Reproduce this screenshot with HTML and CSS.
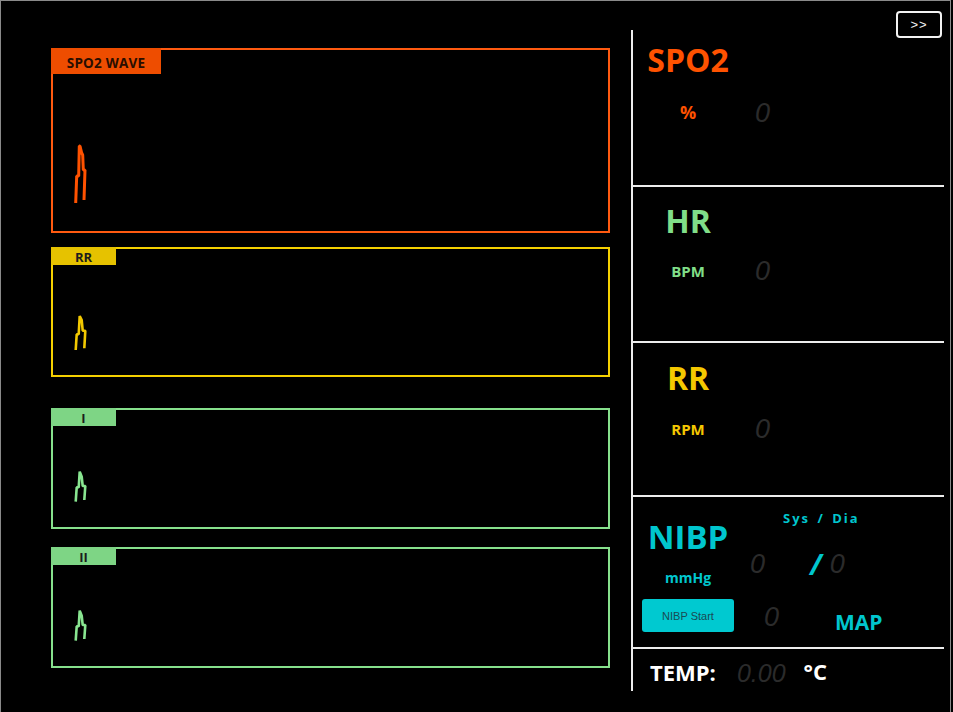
FILE: index.html
```html
<!DOCTYPE html>
<html lang="en">
<head>
<meta charset="utf-8">
<title>Monitor</title>
<link rel="stylesheet" href="styles.css">
</head>
<body>
<div class="screen">
  <div class="waves">
    <div class="wave wave-spo2">
      <div class="tag tag-big">SPO2 WAVE</div>
      <svg class="trace" viewBox="0 0 555 181" width="555" height="181"><polyline points="22.7,153 23.7,126 25.7,126 26.3,96 27,96 28.7,103 29.7,105 30.3,120 32,120 31,150" /></svg>
    </div>
    <div class="wave wave-rr">
      <div class="tag">RR</div>
      <svg class="trace" viewBox="0 0 555 126" width="555" height="126"><polyline points="22.7,101 23.7,85.3 25.7,85.3 26.7,67 28.7,71 29.7,81.7 32.3,81.7 31.3,99.3" /></svg>
    </div>
    <div class="wave wave-ecg wave-i">
      <div class="tag">I</div>
      <svg class="trace" viewBox="0 0 555 117" width="555" height="117"><polyline points="22.7,91.7 23.7,77.3 25.7,77.3 26.7,61.7 28.7,66.7 29.7,76 32.3,76 31.3,90" /></svg>
    </div>
    <div class="wave wave-ecg wave-ii">
      <div class="tag">II</div>
      <svg class="trace" viewBox="0 0 555 117" width="555" height="117"><polyline points="22.7,91.7 23.7,77.3 25.7,77.3 26.7,61.7 28.7,66.7 29.7,76 32.3,76 31.3,90" /></svg>
    </div>
  </div>

  <div class="side">
    <div class="side-head">
      <button class="next-btn" type="button">&gt;&gt;</button>
    </div>
    <div class="panel">
      <section class="vital vital-spo2">
        <div class="v-title">SPO2</div>
        <div class="v-unit v-unit-pct">%</div>
        <div class="seg v-value">0</div>
      </section>
      <section class="vital vital-hr">
        <div class="v-title">HR</div>
        <div class="v-unit">BPM</div>
        <div class="seg v-value">0</div>
      </section>
      <section class="vital vital-rr">
        <div class="v-title">RR</div>
        <div class="v-unit">RPM</div>
        <div class="seg v-value">0</div>
      </section>
      <section class="nibp">
        <div class="nibp-left">
          <div class="nibp-title">NIBP</div>
          <div class="nibp-unit">mmHg</div>
          <button class="nibp-btn" type="button">NIBP Start</button>
        </div>
        <div class="nibp-right">
          <div class="sysdia">Sys / Dia</div>
          <div class="bp-row">
            <span class="seg bp-sys">0</span>
            <span class="bp-slash">/</span>
            <span class="seg bp-dia">0</span>
          </div>
          <div class="map-row">
            <span class="seg map-val">0</span>
            <span class="map-label">MAP</span>
          </div>
        </div>
      </section>
      <section class="temp">
        <span class="temp-label">TEMP:</span>
        <span class="seg temp-val">0.00</span>
        <span class="temp-unit">°C</span>
      </section>
    </div>
  </div>
</div>
</body>
</html>
```

FILE: styles.css
```css
* { box-sizing: border-box; }
html, body {
  margin: 0;
  padding: 0;
  background: #000;
  overflow: hidden;
}
body {
  font-family: "Open Sans", "Liberation Sans", sans-serif;
  color: #fff;
}
.screen {
  width: 951px;
  height: 730px;
  border: 1px solid #8a8a8a;
  background: #000;
  display: flex;
}

/* ---------- waves ---------- */
.waves {
  width: 609px;
  padding: 47px 0 0 50px;
  display: flex;
  flex-direction: column;
}
.wave {
  position: relative;
  width: 559px;
  border: 2px solid;
  background: #000;
}
.trace {
  position: absolute;
  left: 0;
  top: 0;
}
.trace polyline {
  fill: none;
  stroke-width: 2.6;
  stroke-linejoin: bevel;
}
.tag {
  position: relative;
  z-index: 1;
  margin: -2px 0 0 -2px;
  width: 65px;
  height: 18px;
  padding-top: 2px;
  text-align: center;
  font-weight: 700;
  font-size: 13px;
  line-height: 17px;
  color: #1c1c1c;
}
.tag-big {
  width: 110px;
  height: 26px;
  padding-top: 7px;
  font-size: 13.5px;
  letter-spacing: 0.2px;
  color: #2a0e00;
}
.wave-spo2 { height: 185px; border-color: #ff5a10; }
.wave-spo2 .tag { background: #ee4d00; }
.wave-spo2 polyline { stroke: #ff5200; stroke-width: 3; }
.wave-rr { height: 130px; margin-top: 14px; border-color: #f5d000; }
.wave-rr .tag { background: #e6c200; }
.wave-rr polyline { stroke: #f2c800; }
.wave-ecg { height: 121px; border-color: #86e08c; }
.wave-ecg .tag { background: #7ed585; }
.wave-ecg polyline { stroke: #88e590; }
.wave-i { margin-top: 31px; }
.wave-ii { margin-top: 18px; }

/* ---------- side panel ---------- */
.side {
  margin-left: 21px;
  width: 313px;
  display: flex;
  flex-direction: column;
}
.side-head {
  height: 29px;
  display: flex;
  justify-content: flex-end;
  padding-right: 2px;
  position: relative;
  z-index: 1;
}
.next-btn {
  margin-top: 10px;
  width: 46px;
  height: 27px;
  border: 2px solid #f2f2f2;
  border-radius: 4px;
  background: #000;
  color: #f2f2f2;
  font-family: "Liberation Sans", Arial, sans-serif;
  font-size: 13px;
  line-height: 20px;
  padding: 0;
  letter-spacing: 1px;
}
.panel {
  height: 661px;
  border-left: 2px solid #ececec;
  display: flex;
  flex-direction: column;
}
.seg {
  font-family: "Liberation Sans", Arial, sans-serif;
  font-style: italic;
  font-weight: 400;
  font-size: 27px;
  line-height: 28px;
  color: #2b2b2b;
}

.vital {
  display: grid;
  grid-template-columns: 110px 1fr;
  grid-template-rows: 32px 28px;
  align-items: center;
  border-bottom: 2px solid #ececec;
}
.v-title {
  grid-column: 1;
  grid-row: 1;
  text-align: center;
  font-weight: 700;
  font-size: 32px;
  line-height: 32px;
}
.v-unit {
  grid-column: 1;
  grid-row: 2;
  text-align: center;
  font-weight: 700;
  font-size: 15px;
  line-height: 15px;
}
.v-unit-pct { font-size: 18px; line-height: 18px; margin-top: -2px; }
.v-value {
  grid-column: 2;
  grid-row: 2;
  margin-left: 12px;
}
.vital-spo2 {
  height: 157px;
  padding-top: 14px;
  row-gap: 23px;
  align-content: start;
  color: #ff5200;
}
.vital-hr {
  height: 156px;
  padding-top: 18px;
  row-gap: 20px;
  align-content: start;
  color: #80de88;
}
.vital-rr {
  height: 154px;
  padding-top: 19px;
  row-gap: 21px;
  align-content: start;
  color: #f5c800;
}
.vital .seg { color: #2b2b2b; }

/* NIBP */
.nibp {
  height: 152px;
  display: grid;
  grid-template-columns: 110px 1fr;
  border-bottom: 2px solid #ececec;
  color: #00c6ce;
}
.nibp-left {
  display: flex;
  flex-direction: column;
  align-items: center;
  padding-top: 23px;
}
.nibp-title {
  font-weight: 700;
  font-size: 33px;
  line-height: 33px;
}
.nibp-unit {
  margin-top: 18px;
  font-weight: 700;
  font-size: 14px;
  line-height: 14px;
}
.nibp-btn {
  margin-top: 14px;
  width: 92px;
  height: 33px;
  border: none;
  border-radius: 3px;
  background: #00c9d0;
  color: #1b4a52;
  font-family: "Liberation Sans", Arial, sans-serif;
  font-size: 11px;
  padding: 0;
}
.nibp-right {
  padding-top: 15px;
}
.sysdia {
  padding-left: 40px;
  font-weight: 700;
  font-size: 13px;
  line-height: 13px;
  letter-spacing: 2px;
  word-spacing: 2px;
}
.bp-row {
  margin-top: 25px;
  display: flex;
  align-items: flex-start;
}
.bp-sys { margin-left: 7px; }
.bp-slash {
  margin-left: 45px;
  font-weight: 700;
  font-style: italic;
  font-size: 28px;
  line-height: 28px;
  color: #00c6ce;
}
.bp-dia { margin-left: 8px; }
.map-row {
  margin-top: 25px;
  display: flex;
  align-items: flex-start;
}
.map-val { margin-left: 21px; }
.map-label {
  margin-left: 56px;
  margin-top: 9px;
  font-weight: 700;
  font-size: 21px;
  line-height: 21px;
}

/* TEMP */
.temp {
  height: 42px;
  display: flex;
  align-items: flex-start;
  padding: 11px 0 0 17px;
}
.temp-label {
  margin-top: 1px;
  font-weight: 700;
  font-size: 22px;
  line-height: 22px;
  color: #fff;
}
.temp-val {
  margin-left: 21px;
  font-size: 25px;
  line-height: 26px;
}
.temp-unit {
  margin-left: 18px;
  font-weight: 700;
  font-size: 22px;
  line-height: 22px;
  color: #fff;
}
```
